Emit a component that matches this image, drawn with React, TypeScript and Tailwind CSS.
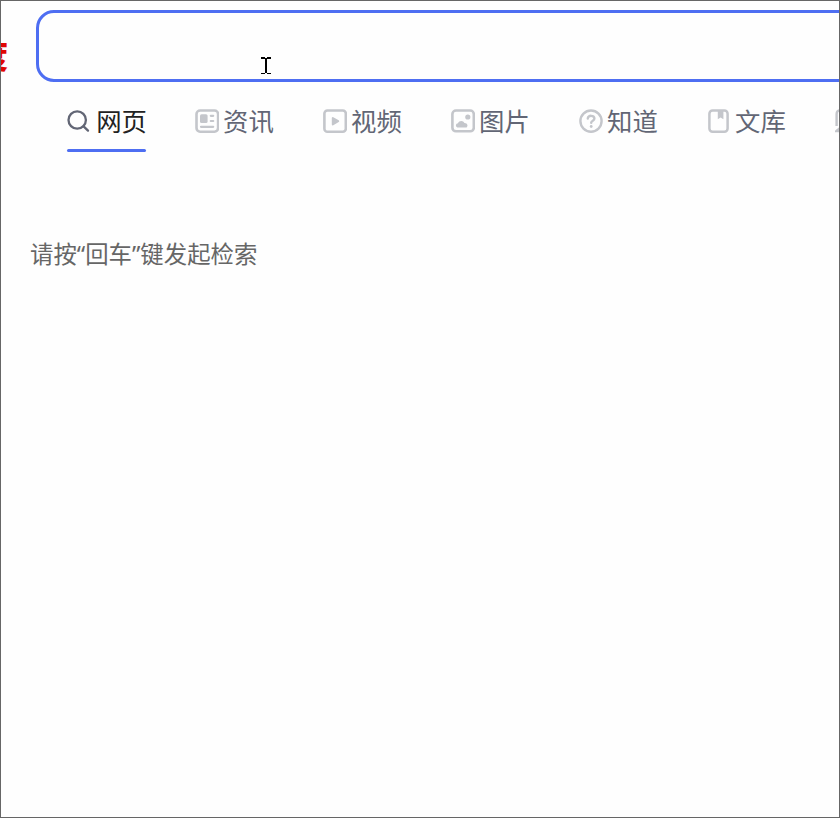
import React from 'react';

const iconClass = "w-6 h-6 shrink-0 text-[#c4c6cb]";

const SearchIcon = () => (
  <svg viewBox="0 0 24 24" className="w-6 h-6 shrink-0 text-[#626675]" fill="none" stroke="currentColor" strokeWidth="2.3" strokeLinecap="round">
    <circle cx="10.2" cy="11" r="8.7" />
    <path d="M16.6 17.4l4.4 4.2" />
  </svg>
);

const NewsIcon = () => (
  <svg viewBox="0 0 24 24" className={iconClass} fill="none" stroke="currentColor" strokeWidth="2.6" strokeLinecap="round">
    <rect x="1.5" y="1.5" width="21.6" height="21.2" rx="3.6" />
    <rect x="5" y="5.2" width="7.6" height="8.8" rx="1.6" fill="currentColor" stroke="none" />
    <path d="M15.8 6.8h2.4M15.8 12h2.4M6 17.8h12.2" strokeWidth="2.2" />
  </svg>
);

const VideoIcon = () => (
  <svg viewBox="0 0 24 24" className={iconClass} fill="none" stroke="currentColor" strokeWidth="2.6">
    <rect x="1.4" y="1.5" width="21.4" height="21.2" rx="3" />
    <path d="M9.8 9v6.4l5.4-3.2z" fill="currentColor" strokeWidth="2" strokeLinejoin="round" />
  </svg>
);

const ImageIcon = () => (
  <svg viewBox="0 0 24 24" className={iconClass} fill="none" stroke="currentColor" strokeWidth="2.6">
    <rect x="1.4" y="1.5" width="21.4" height="20.8" rx="3.6" />
    <circle cx="16.8" cy="8" r="2.6" fill="currentColor" stroke="none" />
    <path d="M6.4 18.4c-2.2-.8-1.8-4 .6-4.1 1-3.2 5.6-3 6.4-.2 3-.2 4 3 2.2 4.3z" fill="currentColor" stroke="none" />
  </svg>
);

const QuestionIcon = () => (
  <svg viewBox="0 0 24 24" className={iconClass} fill="none" stroke="currentColor" strokeWidth="2.4" strokeLinecap="round">
    <circle cx="12" cy="12.1" r="10.6" />
    <path d="M8.8 9.6c0-3.8 6.6-3.6 6.6 0 0 2.2-3.2 2-3.2 4.2" />
    <circle cx="12.2" cy="17.5" r="1.4" fill="currentColor" stroke="none" />
  </svg>
);

const LibraryIcon = () => (
  <svg viewBox="0 0 24 24" className={iconClass} fill="none" stroke="currentColor" strokeWidth="2.5">
    <rect x="2.4" y="1.5" width="18.2" height="21.2" rx="3.2" />
    <path d="M10.8 2v8.2l2.8-1.6 2.8 1.6V2z" fill="currentColor" stroke="none" />
  </svg>
);

const MoreIcon = () => (
  <svg viewBox="0 0 24 24" className={iconClass} fill="none" stroke="currentColor" strokeWidth="2.4">
    <path d="M8 1.5H5Q1.6 1.5 1.6 5v12M8 13c0 4-3 6-6.5 9H8" />
  </svg>
);

const tabs = [
  { name: "资讯", icon: <NewsIcon /> },
  { name: "视频", icon: <VideoIcon /> },
  { name: "图片", icon: <ImageIcon /> },
  { name: "知道", icon: <QuestionIcon /> },
  { name: "文库", icon: <LibraryIcon /> },
];

const App = () => {
  return (
    <div className="relative w-[840px] h-[818px] overflow-hidden border border-[#666666] bg-[#fefefe] font-['Noto_Sans','Noto_Sans_CJK_SC',sans-serif]">
      {/* Logo tail and search box */}
      <div className="flex pt-[9px]">
        <div className="w-[7px] h-[72px] mr-7 shrink-0 flex justify-end">
          <span className="text-[32px] leading-[91px] font-black text-[#e10602]">度</span>
        </div>
        <div className="w-[860px] h-[72px] shrink-0 rounded-[18px] border-3 border-[#4e6ef2] bg-[#fefefe]" />
      </div>

      {/* Tabs */}
      <div className="flex pl-[66px] pt-[17px] text-[25.4px] leading-[44px] whitespace-nowrap">
        <div className="w-32 shrink-0">
          <div className="w-[79px]">
            <div className="flex items-center justify-between h-11 text-[#222222]">
              <SearchIcon />
              <span className="-mr-px">网页</span>
            </div>
            <div className="mt-[6px] h-[3px] rounded-[2px] bg-[#4e6ef2]" />
          </div>
        </div>
        {tabs.map((tab) => (
          <div key={tab.name} className="flex items-center gap-[4px] w-32 h-11 shrink-0 text-[#626675]">
            {tab.icon}
            <span>{tab.name}</span>
          </div>
        ))}
        <div className="flex items-center h-11">
          <MoreIcon />
        </div>
      </div>

      {/* Hint */}
      <p className="pl-[29px] pt-[84px] text-[23.4px] leading-9 text-[#666666]">请按“回车”键发起检索</p>

      {/* Text cursor */}
      <svg viewBox="0 0 12 18" className="absolute left-[260px] top-[56px] w-3 h-[18px]" shapeRendering="crispEdges">
        <path d="M0 0h4v1h2V0h4v2H6v14h4v1H6v-1H4v1H0v-1h4V2H0z" fill="#000000" />
      </svg>
    </div>
  );
};

export default App;
